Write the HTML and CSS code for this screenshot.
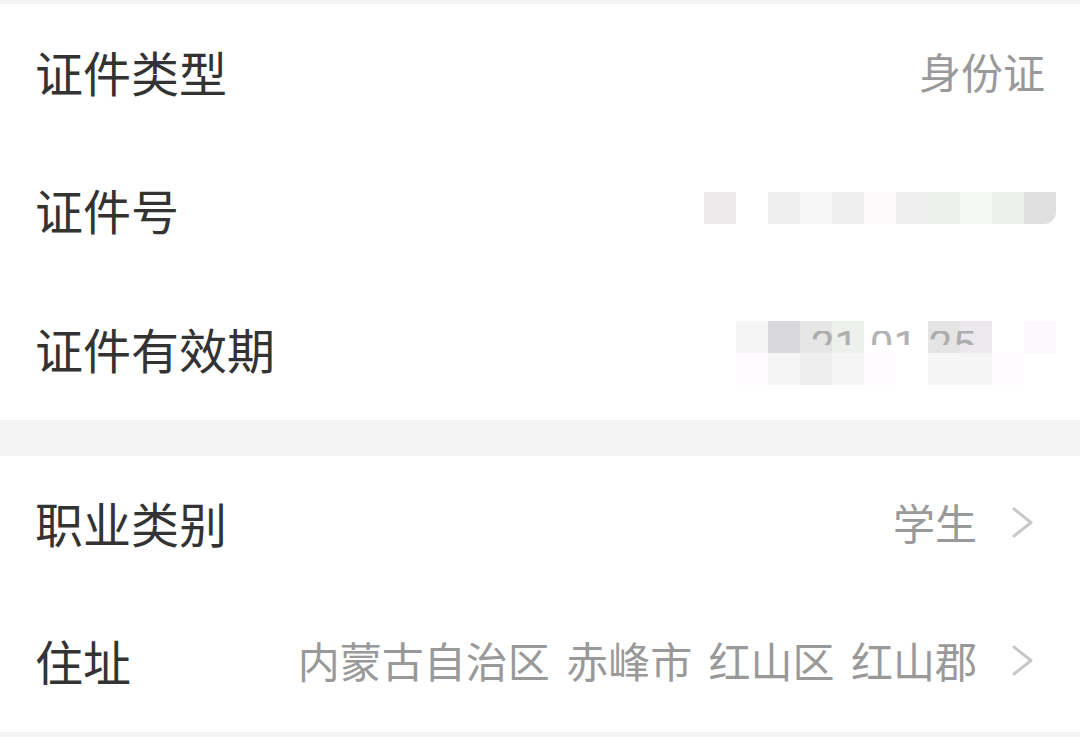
FILE: index.html
```html
<!DOCTYPE html>
<html lang="zh-CN">
<head>
<meta charset="utf-8">
<title>证件信息</title>
<link rel="stylesheet" href="styles.css">
</head>
<body>
<div class="page">
  <section class="section">
    <div class="row">
      <span class="label">证件类型</span>
      <span class="value">身份证</span>
    </div>
    <div class="row row-mosaic">
      <span class="label">证件号</span>
      <div class="mosaic-id"></div>
    </div>
    <div class="row row-mosaic">
      <span class="label">证件有效期</span>
      <div class="mosaic-date">
        <div class="mosaic-line mosaic-top"></div>
        <div class="mosaic-line mosaic-bottom"></div>
        <div class="mosaic-text"><span>21-01-25</span></div>
      </div>
    </div>
  </section>
  <section class="section">
    <div class="row">
      <span class="label">职业类别</span>
      <span class="value value-link">学生</span>
      <svg class="chevron" viewBox="0 0 21 31" width="21" height="31"><polyline points="2,2 19,15.5 2,29"/></svg>
    </div>
    <div class="row">
      <span class="label">住址</span>
      <span class="value value-link address">内蒙古自治区 赤峰市 红山区 红山郡</span>
      <svg class="chevron" viewBox="0 0 21 31" width="21" height="31"><polyline points="2,2 19,15.5 2,29"/></svg>
    </div>
  </section>
</div>
</body>
</html>
```

FILE: styles.css
```css
html, body {
  margin: 0;
  padding: 0;
}
body {
  background: #f4f4f4;
  width: 1080px;
  height: 737px;
  overflow: hidden;
  font-family: "Noto Sans CJK SC", "Noto Sans", sans-serif;
}
.page {
  padding-top: 4px;
}
.section {
  background: #ffffff;
}
.section + .section {
  margin-top: 36px;
}
.row {
  display: flex;
  align-items: center;
  box-sizing: border-box;
  height: 138.67px;
  padding: 0 35px 5px 35px;
}
.section + .section .row {
  height: 138px;
}
.label {
  font-size: 48px;
  line-height: 1;
  color: #333333;
  white-space: nowrap;
}
.value {
  margin-left: auto;
  font-size: 42px;
  line-height: 1;
  color: #999999;
  white-space: nowrap;
}
.value-link {
  margin-right: 35px;
}
.address {
  word-spacing: 7px;
}
.chevron {
  display: block;
  margin-right: 12px;
  margin-top: 1px;
  fill: none;
  stroke: #c8c8c8;
  stroke-width: 3;
  stroke-linecap: round;
  stroke-linejoin: round;
}
.row-mosaic {
  padding-right: 24px;
}
.mosaic-id {
  margin-left: auto;
  margin-top: -2px;
  width: 352px;
  height: 32px;
  border-bottom-right-radius: 12px;
  background: linear-gradient(to right,
    #eeeaec 0 32px, #ffffff 32px 64px, #efefef 64px 96px, #f6f6f6 96px 128px,
    #efefef 128px 160px, #fdfafc 160px 192px, #efefef 192px 224px, #eef0ee 224px 256px,
    #f5f8f5 256px 288px, #eef0ee 288px 320px, #e0e0e0 320px 352px);
}
.mosaic-date {
  position: relative;
  margin-left: auto;
  margin-top: 10px;
  width: 320px;
  height: 64px;
}
.mosaic-line {
  height: 32px;
}
.mosaic-top {
  background: linear-gradient(to right,
    #f5f5f5 0 32px, #d9d8db 32px 64px, #e6e6e6 64px 96px, #eef0ee 96px 128px,
    #ffffff 128px 192px, #e4e4e4 192px 224px, #ece9ec 224px 256px,
    #ffffff 256px 288px, #fcf9fc 288px 320px);
}
.mosaic-bottom {
  background: linear-gradient(to right,
    #fdfbfd 0 32px, #f5f5f5 32px 64px, #eeeeee 64px 96px, #f5f5f5 96px 128px,
    #fdfbfd 128px 160px, #ffffff 160px 192px, #f5f5f5 192px 224px, #f5f5f5 224px 256px,
    #fdfbfd 256px 288px, #ffffff 288px 320px);
}
.mosaic-text {
  position: absolute;
  left: 75px;
  top: 10px;
  height: 14px;
  overflow: hidden;
}
.mosaic-text span {
  display: block;
  margin-top: -6px;
  font-family: Roboto, "Noto Sans", sans-serif;
  font-size: 42px;
  line-height: 1;
  color: #a0a0a0;
  opacity: 0.8;
}
```
